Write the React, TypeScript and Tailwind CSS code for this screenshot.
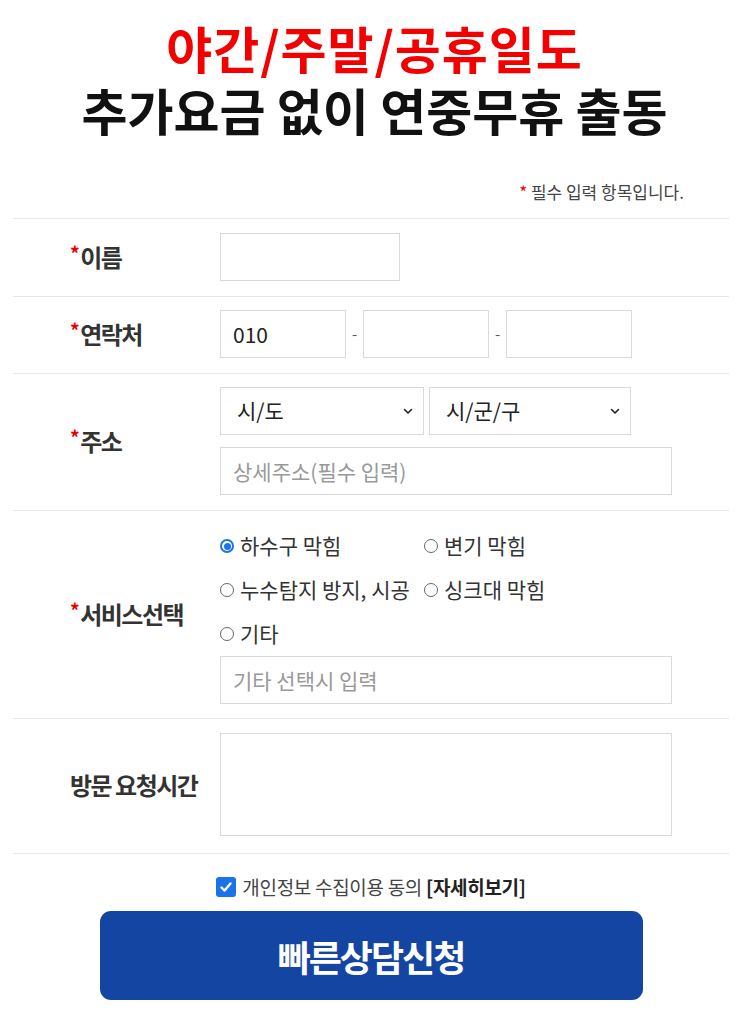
import React from "react";

const font = { fontFamily: '"Noto Sans CJK KR", "Noto Sans", sans-serif' };

function Label({ text, req = true }: { text: string; req?: boolean }) {
  return (
    <div className="w-[207px] shrink-0 pl-[57px] flex items-center text-[24px] font-bold tracking-[-1.5px] text-[#333]">
      {req && <span className="text-[#e60000] text-[19px] mr-[2px] -mt-[7px]">*</span>}
      <span>{text}</span>
    </div>
  );
}

function Chevron() {
  return (
    <svg width="10" height="7" viewBox="0 0 10 7" className="absolute right-[11px] top-[21px] pointer-events-none">
      <path d="M1.5 1.5 L5 5 L8.5 1.5" fill="none" stroke="#222" strokeWidth="1.6" strokeLinecap="round" strokeLinejoin="round" />
    </svg>
  );
}

function Radio({ checked = false, label }: { checked?: boolean; label: string }) {
  return (
    <label className="flex items-center gap-[6px] text-[21px] text-[#333] h-[44px] cursor-pointer whitespace-nowrap">
      {checked ? (
        <span className="w-[14px] h-[14px] shrink-0 rounded-full bg-[#1a73e8] flex items-center justify-center">
          <span className="w-[10px] h-[10px] rounded-full bg-white flex items-center justify-center">
            <span className="w-[7px] h-[7px] rounded-full bg-[#1a73e8]" />
          </span>
        </span>
      ) : (
        <span className="w-[14px] h-[14px] shrink-0 rounded-full border border-[#666] bg-white" />
      )}
      <span>{label}</span>
    </label>
  );
}

const inputCls =
  "h-[48px] border border-[#d9d9d9] bg-white px-[12px] text-[21px] text-[#222] placeholder:text-[#999] outline-none";

export default function App() {
  return (
    <div style={font} className="w-[749px] bg-white min-h-[1024px] text-[#222]">
      <div className="pt-[22px] flex flex-col items-center gap-[12px] text-center font-bold text-[50px] leading-[50px]">
        <div className="text-[#f40000] tracking-[1px]">야간/주말/공휴일도</div>
        <div className="text-[#111]">추가요금 없이 연중무휴 출동</div>
      </div>

      <div className="ml-[13px] w-[716px]">
        <div className="mt-[47px] mb-[15px] pr-[45px] text-right text-[17px] leading-[22px] text-[#444]">
          <span className="text-[#e60000]">*</span> 필수 입력 항목입니다.
        </div>

        {/* 이름 */}
        <div className="flex border-t border-[#e6e6e6] pt-[14px] pb-[15px]">
          <Label text="이름" />
          <input className={`${inputCls} w-[180px]`} />
        </div>

        {/* 연락처 */}
        <div className="flex border-t border-[#e6e6e6] pt-[13px] pb-[15px]">
          <Label text="연락처" />
          <div className="flex items-center">
            <input className={`${inputCls} w-[126px]`} defaultValue="010" />
            <span className="w-[17px] text-center text-[15px] text-[#555]">-</span>
            <input className={`${inputCls} w-[126px]`} />
            <span className="w-[17px] text-center text-[15px] text-[#555]">-</span>
            <input className={`${inputCls} w-[126px]`} />
          </div>
        </div>

        {/* 주소 */}
        <div className="flex border-t border-[#e6e6e6] pt-[13px] pb-[15px]">
          <Label text="주소" />
          <div className="flex flex-col gap-[12px]">
            <div className="flex gap-[5px]">
              <div className="relative w-[204px]">
                <select className={`${inputCls} pl-[16px] w-full appearance-none`} defaultValue="">
                  <option value="">시/도</option>
                </select>
                <Chevron />
              </div>
              <div className="relative w-[202px]">
                <select className={`${inputCls} pl-[16px] w-full appearance-none`} defaultValue="">
                  <option value="">시/군/구</option>
                </select>
                <Chevron />
              </div>
            </div>
            <input className={`${inputCls} w-[452px]`} placeholder="상세주소(필수 입력)" />
          </div>
        </div>

        {/* 서비스선택 */}
        <div className="flex border-t border-[#e6e6e6] pt-[13px] pb-[14px]">
          <Label text="서비스선택" />
          <div className="flex flex-col">
            <div className="grid grid-cols-[204px_204px]">
              <Radio checked label="하수구 막힘" />
              <Radio label="변기 막힘" />
              <Radio label="누수탐지 방지, 시공" />
              <Radio label="싱크대 막힘" />
              <Radio label="기타" />
            </div>
            <input className={`${inputCls} w-[452px]`} placeholder="기타 선택시 입력" />
          </div>
        </div>

        {/* 방문 요청시간 */}
        <div className="flex border-t border-[#e6e6e6] pt-[14px] pb-[17px]">
          <Label text="방문 요청시간" req={false} />
          <textarea className="w-[452px] h-[103px] border border-[#d9d9d9] resize-none outline-none p-[10px] text-[16px]" />
        </div>

        <div className="border-t border-[#e6e6e6] pt-[23px] flex flex-col items-center">
          <div className="flex items-center gap-[6px] h-[20px]">
            <span className="w-[20px] h-[20px] rounded-[3px] bg-[#1a73e8] flex items-center justify-center">
              <svg width="14" height="14" viewBox="0 0 14 14">
                <path d="M2.5 7.5 L5.6 10.6 L11.5 3.5" fill="none" stroke="white" strokeWidth="2.4" strokeLinecap="round" strokeLinejoin="round" />
              </svg>
            </span>
            <span className="text-[19px] text-[#444] tracking-[-0.3px]">
              개인정보 수집이용 동의 <b className="text-[#222]">[자세히보기]</b>
            </span>
          </div>
          <button className="mt-[14px] w-[543px] h-[89px] rounded-[11px] bg-[#1445a3] text-white text-[36px] font-bold tracking-[-2px] flex items-center justify-center">
            빠른상담신청
          </button>
        </div>
      </div>
    </div>
  );
}
